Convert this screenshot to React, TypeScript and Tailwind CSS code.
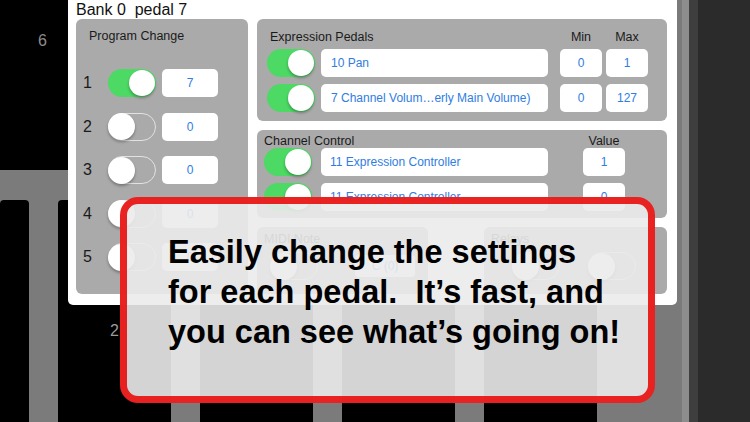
import React from "react";

function Toggle({ on }: { on: boolean }) {
  if (on) {
    return (
      <div className="w-[48px] h-[28px] shrink-0 rounded-full bg-[#4cd964] flex items-center justify-end p-[1px]">
        <div className="w-[26px] h-[26px] rounded-full bg-white shadow-[0_2px_3px_rgba(0,0,0,0.3)]" />
      </div>
    );
  }
  return (
    <div className="w-[48px] h-[28px] shrink-0 rounded-full border-[1.5px] border-[#e2e2e2] flex items-center justify-start">
      <div className="w-[27px] h-[27px] -ml-[1.5px] rounded-full bg-white shadow-[0_2px_3px_rgba(0,0,0,0.3)]" />
    </div>
  );
}

function Field({ text, className }: { text: string; className: string }) {
  return (
    <div
      className={
        "h-[28px] shrink-0 rounded-[5px] bg-white text-[12px] text-[#2f7de1] flex items-center " +
        className
      }
    >
      {text}
    </div>
  );
}

function ProgramChange() {
  const rows: [string, boolean, string][] = [
    ["1", true, "7"],
    ["2", false, "0"],
    ["3", false, "0"],
    ["4", false, "0"],
    ["5", false, "0"],
  ];
  return (
    <div className="w-[172px] h-[275px] shrink-0 rounded-[6px] bg-[#aaaaaa] pt-[9px]">
      <div className="pl-[13px] text-[12.5px] leading-[16px] text-[#1a1a1a]">Program Change</div>
      <div className="mt-[25px] flex flex-col gap-[15.5px] pl-[7px]">
        {rows.map(([n, on, v]) => (
          <div key={n} className="flex items-center h-[28px]">
            <div className="w-[25px] text-[16px] text-[#1a1a1a]">{n}</div>
            <Toggle on={on} />
            <Field text={v} className="ml-[6px] w-[56px] justify-center" />
          </div>
        ))}
      </div>
    </div>
  );
}

function ExpressionPedals() {
  const rows: [string, string, string][] = [
    ["10 Pan", "0", "1"],
    ["7 Channel Volum\u2026erly Main Volume)", "0", "127"],
  ];
  return (
    <div className="h-[102px] rounded-[6px] bg-[#aaaaaa] pt-[10px]">
      <div className="flex items-center pl-[13px] pr-[19px] text-[12.5px] leading-[16px] text-[#1a1a1a]">
        <div className="flex-1">Expression Pedals</div>
        <div className="w-[42px] text-center">Min</div>
        <div className="ml-[4px] w-[42px] text-center">Max</div>
      </div>
      <div className="mt-[4px] flex flex-col gap-[7px] pl-[10px]">
        {rows.map(([t, mn, mx]) => (
          <div key={t} className="flex items-center h-[28px]">
            <Toggle on={true} />
            <Field text={t} className="ml-[6px] w-[227px] pl-[10px]" />
            <Field text={mn} className="ml-[12px] w-[42px] justify-center" />
            <Field text={mx} className="ml-[4px] w-[42px] justify-center" />
          </div>
        ))}
      </div>
    </div>
  );
}

function ChannelControl() {
  const rows: [string, string][] = [
    ["11 Expression Controller", "1"],
    ["11 Expression Controller", "0"],
  ];
  return (
    <div className="h-[88px] rounded-[6px] bg-[#aaaaaa] pt-[4px]">
      <div className="flex items-center pl-[7px] pr-[42px] text-[12.5px] leading-[14px] text-[#1a1a1a]">
        <div className="flex-1">Channel Control</div>
        <div className="w-[42px] text-center">Value</div>
      </div>
      <div className="flex flex-col gap-[7px] pl-[7px]">
        {rows.map(([t, v], i) => (
          <div key={i} className="flex items-center h-[28px]">
            <Toggle on={true} />
            <Field text={t} className="ml-[9px] w-[227px] pl-[9px]" />
            <Field text={v} className="ml-[35px] w-[42px] justify-center" />
          </div>
        ))}
      </div>
    </div>
  );
}

function BottomRow() {
  return (
    <div className="h-[67px] flex justify-between">
      <div className="w-[171px] rounded-[6px] bg-[#aaaaaa] pt-[5px]">
        <div className="pl-[7px] text-[12.5px] leading-[14px] text-[#1a1a1a]">MIDI Note</div>
        <div className="mt-[6px] pl-[13px] flex items-center h-[28px]">
          <Toggle on={false} />
          <div className="ml-[37px] w-[60px] h-[22px] rounded-[4px] bg-white text-[12px] text-[#2f7de1] flex items-center justify-center">
            C (0)
          </div>
        </div>
      </div>
      <div className="w-[183px] rounded-[6px] bg-[#aaaaaa] pt-[5px]">
        <div className="pl-[7px] text-[12.5px] leading-[14px] text-[#1a1a1a]">Relays</div>
        <div className="mt-[6px] pl-[28px] flex items-center gap-[28px] h-[28px]">
          <Toggle on={false} />
          <Toggle on={false} />
        </div>
      </div>
    </div>
  );
}

export default function App() {
  const keys = [29, 113, 113, 113, 113];
  return (
    <div className="relative w-[750px] h-[422px] overflow-hidden bg-black flex font-['Liberation_Sans',Arial,sans-serif]">
      {/* background piano view */}
      <div className="w-[597px] h-full flex flex-col shrink-0">
        <div className="h-[170px] bg-black pl-[38px] pt-[31px] text-[16px] leading-[19px] text-[#8c8c8c]">6</div>
        <div className="h-[30px] bg-[#7b7b7b]" />
        <div className="flex-1 bg-[#7b7b7b] flex gap-[29px]">
          {keys.map((w, i) => (
            <div
              key={i}
              style={{ width: w }}
              className="h-full shrink-0 bg-black rounded-t-[4px] text-center text-[16px] leading-[19px] text-[#9a9a9a] pt-[121px]"
            >
              {i === 1 ? "2" : ""}
            </div>
          ))}
        </div>
      </div>
      <div className="w-[85px] h-full bg-[#7a7a7a] shrink-0" />
      <div className="w-[7px] h-full bg-[#8d8d8d] shrink-0" />
      <div className="w-[9px] h-full bg-[#3e3e3e] shrink-0" />
      <div className="flex-1 h-full bg-[#2b2b2b]" />

      {/* settings popover */}
      <div className="absolute left-[68px] top-0 w-[609px] h-[305px] bg-white rounded-b-[5px]">
        <div className="pl-[8px] h-[19px] text-[16px] leading-[19px] text-[#111] whitespace-pre">Bank 0  pedal 7</div>
        <div className="flex gap-[9px] pl-[8px] pr-[10px]">
          <ProgramChange />
          <div className="w-[410px] flex flex-col gap-[9px]">
            <ExpressionPedals />
            <ChannelControl />
            <BottomRow />
          </div>
        </div>
      </div>

      {/* callout */}
      <div className="absolute left-[120px] top-[197px] w-[535px] h-[206px] rounded-[18px] border-[7px] border-[rgba(232,16,16,0.92)] bg-[rgba(235,235,235,0.9)] pl-[41px] pt-[28px] text-[32.5px] leading-[40px] font-bold text-black whitespace-pre">
        <div>Easily change the settings</div>
        <div>for each pedal.  It{"\u2019"}s fast, and</div>
        <div>you can see what{"\u2019"}s going on!</div>
      </div>
    </div>
  );
}
